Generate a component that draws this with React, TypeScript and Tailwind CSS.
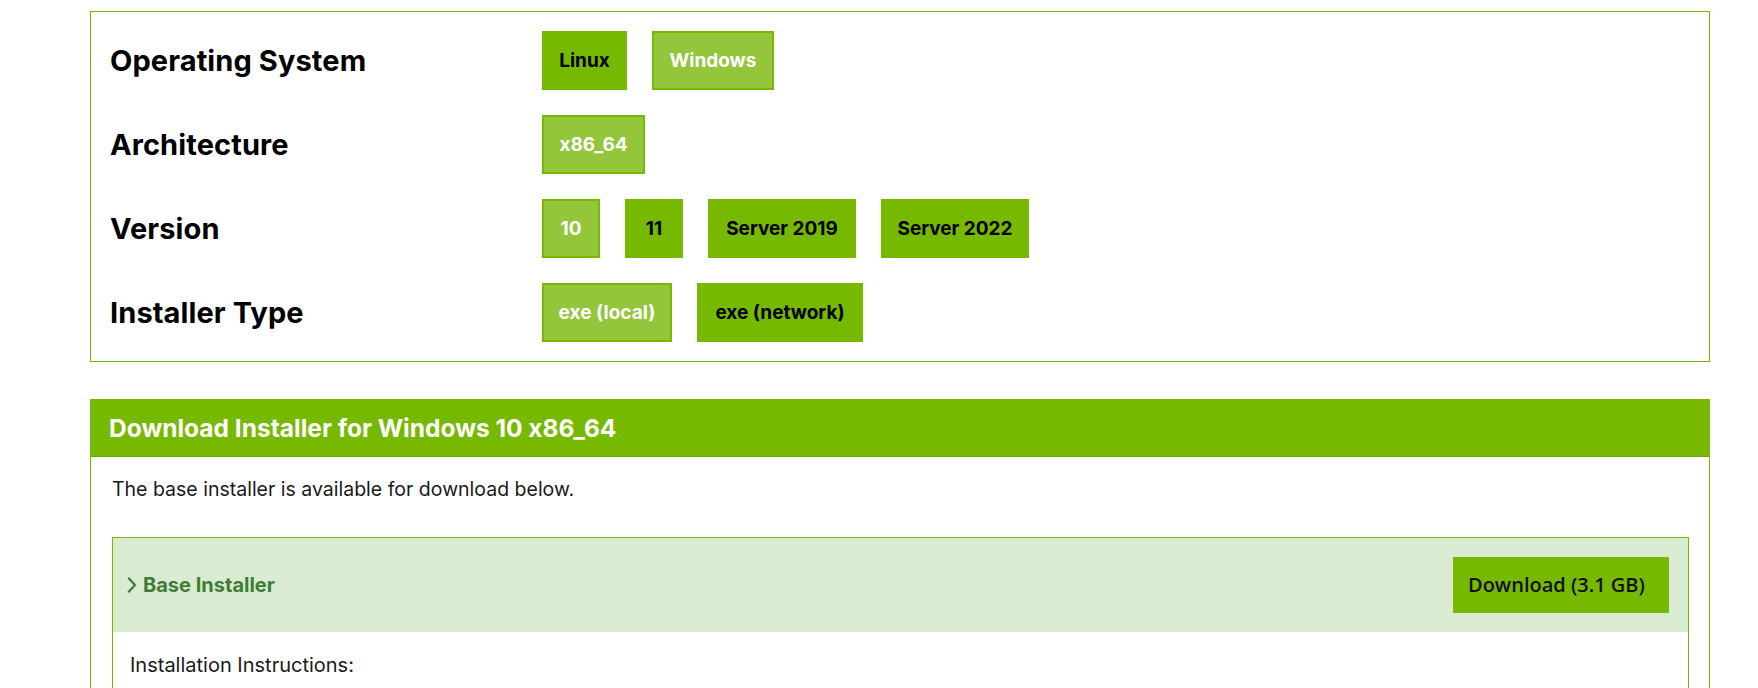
import React from "react";

type Choice = {
  text: string;
  selected: boolean;
  width: string;
};

const OPTIONS: { label: string; choices: Choice[] }[] = [
  {
    label: "Operating System",
    choices: [
      { text: "Linux", selected: false, width: "w-[85px]" },
      { text: "Windows", selected: true, width: "w-[122px]" },
    ],
  },
  {
    label: "Architecture",
    choices: [{ text: "x86_64", selected: true, width: "w-[103px]" }],
  },
  {
    label: "Version",
    choices: [
      { text: "10", selected: true, width: "w-[58px]" },
      { text: "11", selected: false, width: "w-[58px]" },
      { text: "Server 2019", selected: false, width: "w-[148px]" },
      { text: "Server 2022", selected: false, width: "w-[148px]" },
    ],
  },
  {
    label: "Installer Type",
    choices: [
      { text: "exe (local)", selected: true, width: "w-[130px]" },
      { text: "exe (network)", selected: false, width: "w-[166px]" },
    ],
  },
];

function ChoiceButton({ choice }: { choice: Choice }) {
  return (
    <button
      type="button"
      className={`${choice.width} h-[59px] flex items-center justify-center border-2 border-[#76b900] text-[19px] font-bold leading-none ${
        choice.selected ? "bg-[#93c63a] text-white" : "bg-[#76b900] text-black"
      }`}
    >
      {choice.text}
    </button>
  );
}

export default function App() {
  return (
    <div className="min-h-screen bg-white font-['Inter','Noto_Sans',sans-serif] [font-feature-settings:'calt'_0] text-black">
      <div className="ml-[90px] w-[1620px] pt-[11px] pb-10">
        {/* Selector */}
        <div className="border border-[#76b900] px-[19px] py-[19px]">
          <div className="grid grid-cols-[432px_1fr] gap-y-[25px]">
            {OPTIONS.map((row) => (
              <React.Fragment key={row.label}>
                <div className="flex items-center h-[59px] text-[29px] font-bold tracking-[0.1px]">
                  {row.label}
                </div>
                <div className="flex items-center gap-[25px]">
                  {row.choices.map((c) => (
                    <ChoiceButton key={c.text} choice={c} />
                  ))}
                </div>
              </React.Fragment>
            ))}
          </div>
        </div>

        {/* Download */}
        <div className="mt-[37px] border border-[#76b900]">
          <div className="h-[57px] bg-[#76b900] border-b border-[#6ca800] flex items-center pl-[18px]">
            <h2 className="text-[24.5px] font-bold text-white">
              Download Installer for Windows 10 x86_64
            </h2>
          </div>

          <div className="pl-[21px] pr-[20px] pt-[19px] pb-8">
            <p className="text-[19.5px] leading-[27px] text-[#1a1a1a]">
              The base installer is available for download below.
            </p>

            <div className="mt-[34px] border border-[#76b900]">
              <div className="bg-[#d9ebd1] py-[19px] pl-[14px] pr-[19px] flex items-center justify-between">
                <div className="flex items-center gap-[6px] text-[#3f7c35]">
                  <svg width="10" height="16" viewBox="0 0 10 16" fill="none">
                    <path
                      d="M2 1.5 L8 8 L2 14.5"
                      stroke="#3f7c35"
                      strokeWidth="2.2"
                      strokeLinecap="square"
                    />
                  </svg>
                  <span className="text-[20px] font-bold">Base Installer</span>
                </div>
                <button
                  type="button"
                  className="w-[216px] h-[56px] bg-[#76b900] flex items-center pl-[15px] font-['Open_Sans',sans-serif] text-[20px] font-semibold text-[#111]"
                >
                  Download (3.1 GB)
                </button>
              </div>

              <div className="pl-[17px] pr-5 pt-[20px] pb-6">
                <p className="text-[20px] leading-[27px] text-[#1a1a1a]">
                  Installation Instructions:
                </p>
                <ol className="mt-3 list-decimal pl-8 text-[20px] leading-[27px] text-[#1a1a1a]">
                  <li>Double click cuda_12.6.2_560.94_windows.exe</li>
                  <li>Follow on-screen prompts</li>
                </ol>
              </div>
            </div>
          </div>
        </div>
      </div>
    </div>
  );
}
